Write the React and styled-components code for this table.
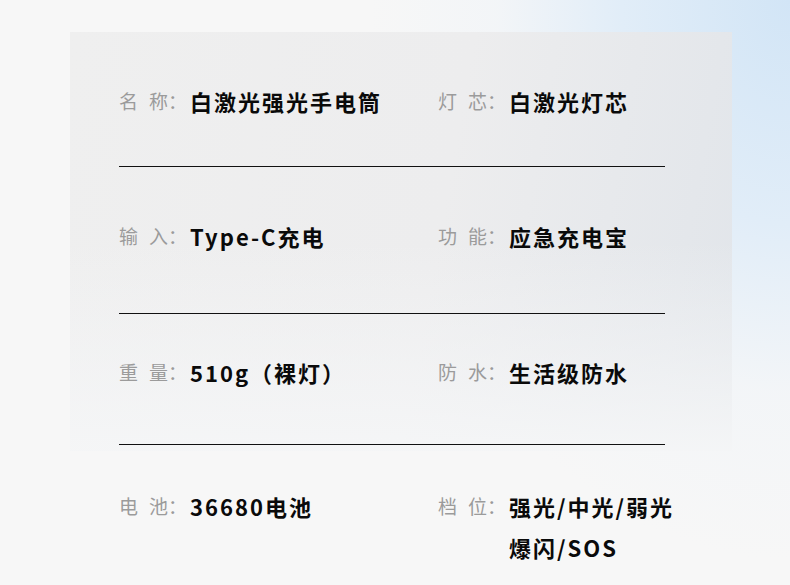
import React from 'react';
import styled, { createGlobalStyle } from 'styled-components';

const specs = [
    { pt: 49, pb: 45, items: [['名', '称', '白激光强光手电筒'], ['灯', '芯', '白激光灯芯']] },
    { pt: 49, pb: 57, items: [['输', '入', 'Type-C充电'], ['功', '能', '应急充电宝']] },
    { pt: 38, pb: 52, items: [['重', '量', '510g（裸灯）'], ['防', '水', '生活级防水']] },
];

const lastRow = [['电', '池', ['36680电池']], ['档', '位', ['强光/中光/弱光', '爆闪/SOS']]];

const App = () => {
    return (<>
        <GlobalStyle />
        <Page>
            <Panel>
                {
                    specs.map((row, i) => {
                        return <Row key={i} pt={row.pt} pb={row.pb} divided>
                            {
                                row.items.map(([a, b, value]) => {
                                    return <Item key={a}>
                                        <Label><First>{a}</First>{b}：</Label>
                                        <Value>{value}</Value>
                                    </Item>
                                })
                            }
                        </Row>
                    })
                }
            </Panel>
            <Outer>
                <Row pt={35} pb={0}>
                    {
                        lastRow.map(([a, b, lines]) => {
                            return <Item key={a}>
                                <Label><First>{a}</First>{b}：</Label>
                                <Value>
                                    {lines.map((l, i) => <Line key={i}>{l}</Line>)}
                                </Value>
                            </Item>
                        })
                    }
                </Row>
            </Outer>
        </Page>
    </>);
}

export default App;

const GlobalStyle = createGlobalStyle`
    html, body {
        margin: 0;
        padding: 0;
    }
    body {
        width: 790px;
        height: 585px;
        overflow: hidden;
        font-family: "Noto Sans CJK SC", "Noto Sans", sans-serif;
    }
`

const Page = styled.div`
    height: 585px;
    box-sizing: border-box;
    padding-top: 32px;
    background:
        radial-gradient(ellipse 420px 560px at 100% 0%, #d2e5f6 0%, #e1edf8 40%, rgba(240,244,248,0.6) 70%, rgba(247,248,249,0) 100%),
        #f7f7f7;
`

const Panel = styled.div`
    margin: 0 58px 0 70px;
    padding: 0 67px 6px 49px;
    background:
        linear-gradient(to bottom, rgba(244,245,246,0) 50%, rgba(245,246,247,0.95) 100%),
        linear-gradient(100deg, #efefef 0%, #ededee 55%, #e1e5ea 100%);
`

const Outer = styled.div`
    margin: 0 58px 0 70px;
    padding: 0 67px 0 49px;
`

const Row = styled.div`
    display: grid;
    grid-template-columns: 319px 1fr;
    padding: ${props => props.pt}px 0 ${props => props.pb}px;
    border-bottom: ${props => props.divided ? '1px solid #111' : 'none'};
`

const Item = styled.div`
    display: flex;
    align-items: flex-start;
    white-space: nowrap;
`

const Label = styled.span`
    flex-shrink: 0;
    width: 71px;
    font-size: 19px;
    line-height: 40px;
    color: #9b9b9b;
`

const First = styled.span`
    margin-right: 11px;
`

const Value = styled.span`
    display: flex;
    flex-direction: column;
    font-size: 22px;
    line-height: 40px;
    font-weight: 700;
    letter-spacing: 2px;
    color: #0a0a0a;
`

const Line = styled.span`
    line-height: 41px;
`
